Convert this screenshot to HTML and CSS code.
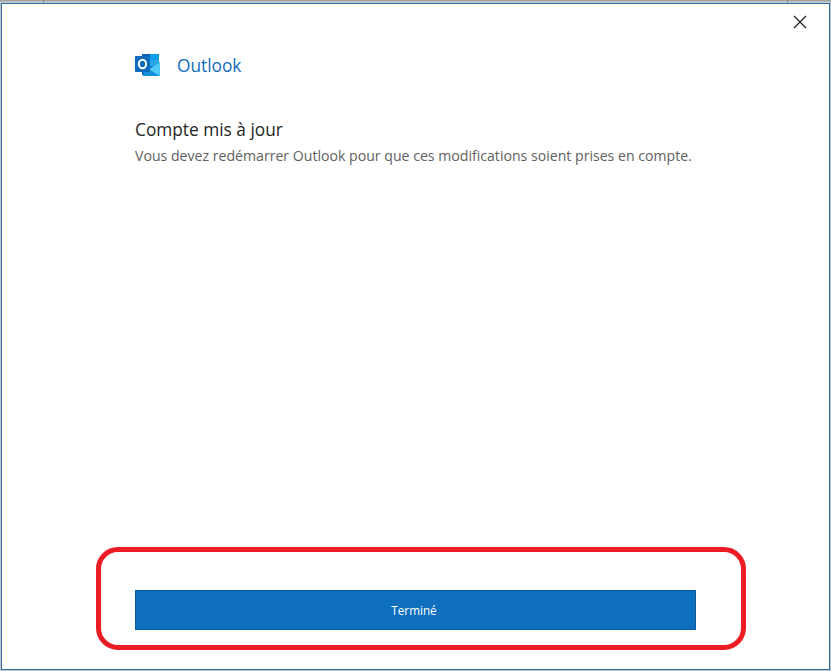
FILE: index.html
```html
<!DOCTYPE html>
<html lang="fr">
<head>
<meta charset="utf-8">
<title>Outlook</title>
<link rel="stylesheet" href="styles.css">
</head>
<body>
<div class="window">
  <button class="close" aria-label="Fermer">
    <svg width="14" height="14" viewBox="0 0 14 14"><path d="M1 1L13 13M13 1L1 13" stroke="#222" stroke-width="1.2" fill="none"/></svg>
  </button>
  <div class="content">
    <div class="brand">
      <svg class="logo" width="26" height="24" viewBox="0 0 26 24">
        <path d="M7 1h8v6H7z" fill="#0a5fb0"/>
        <path d="M15 1h9v6h-9z" fill="#0f9fea"/>
        <path d="M7 7h8v6H7z" fill="#0f78d4"/>
        <path d="M15 7h9v6h-9z" fill="#28a8ea"/>
        <path d="M15 13h9v6h-9z" fill="#0f78d4"/>
        <path d="M7 13h8v9H7z" fill="#0a5ba8"/>
        <path d="M25 9v14H8V20z" fill="#1490df"/>
        <path d="M25 9l-11 7.500L25 23z" fill="#50c8f5"/>
        <rect x="0" y="3" width="15" height="16" rx="1" fill="#0f6cbd"/>
        <ellipse cx="7.500" cy="11" rx="3.600" ry="4.300" fill="none" stroke="#fff" stroke-width="2"/>
      </svg>
      <span class="brand-name">Outlook</span>
    </div>
    <h1 class="title">Compte mis à jour</h1>
    <p class="message">Vous devez redémarrer Outlook pour que ces modifications soient prises en compte.</p>
    <div class="spacer"></div>
    <button class="done">Terminé</button>
  </div>
  <div class="highlight"></div>
</div>
</body>
</html>
```
FILE: styles.css
```css
html, body {
  margin: 0;
  height: 100%;
}
body {
  width: 831px;
  height: 671px;
  overflow: hidden;
  background-color: #c4c4c4;
  background-image:
    linear-gradient(#8a8a8a, #8a8a8a),
    linear-gradient(#8a8a8a, #8a8a8a),
    linear-gradient(#9c9c9c, #d2d2d2);
  background-size: 1px 3px, 1px 3px, 100% 3px;
  background-position: 43px 0, 787px 0, 0 0;
  background-repeat: no-repeat;
  padding: 3px 1px 1px 1px;
  box-sizing: border-box;
  font-family: "Open Sans", "Noto Sans", sans-serif;
}
.window {
  position: relative;
  box-sizing: border-box;
  width: 829px;
  height: 667px;
  background: #fff;
  border: 1px solid #2b6ca8;
}
.content {
  box-sizing: border-box;
  height: 100%;
  display: flex;
  flex-direction: column;
  padding: 0 133px 39px 133px;
}
.close {
  position: absolute;
  top: 11px;
  right: 22px;
  width: 14px;
  height: 14px;
  padding: 0;
  border: 0;
  background: none;
  display: block;
}
.close svg { display: block; }
.brand {
  display: flex;
  align-items: center;
  gap: 16px;
  margin-top: 49px;
  height: 24px;
}
.logo { display: block; }
.brand-name {
  font-size: 17.3px;
  color: #0f6cbd;
}
.title {
  margin: 42px 0 0;
  font-size: 17.3px;
  line-height: 22px;
  font-weight: 400;
  color: #262626;
}
.message {
  margin: 5px 0 0;
  font-size: 14.12px;
  line-height: 20px;
  color: #616161;
  white-space: nowrap;
}
.spacer { flex: 1; }
.done {
  box-sizing: border-box;
  width: 561px;
  height: 40px;
  background: #0f6fbf;
  border: 1px solid #0b5a9c;
  color: #fff;
  font-family: inherit;
  font-size: 11.7px;
  padding: 0 3px 0 0;
}
.highlight {
  position: absolute;
  left: 94px;
  top: 543px;
  width: 650px;
  height: 103px;
  box-sizing: border-box;
  border: 5px solid #ed1c24;
  border-radius: 22px;
}
```
